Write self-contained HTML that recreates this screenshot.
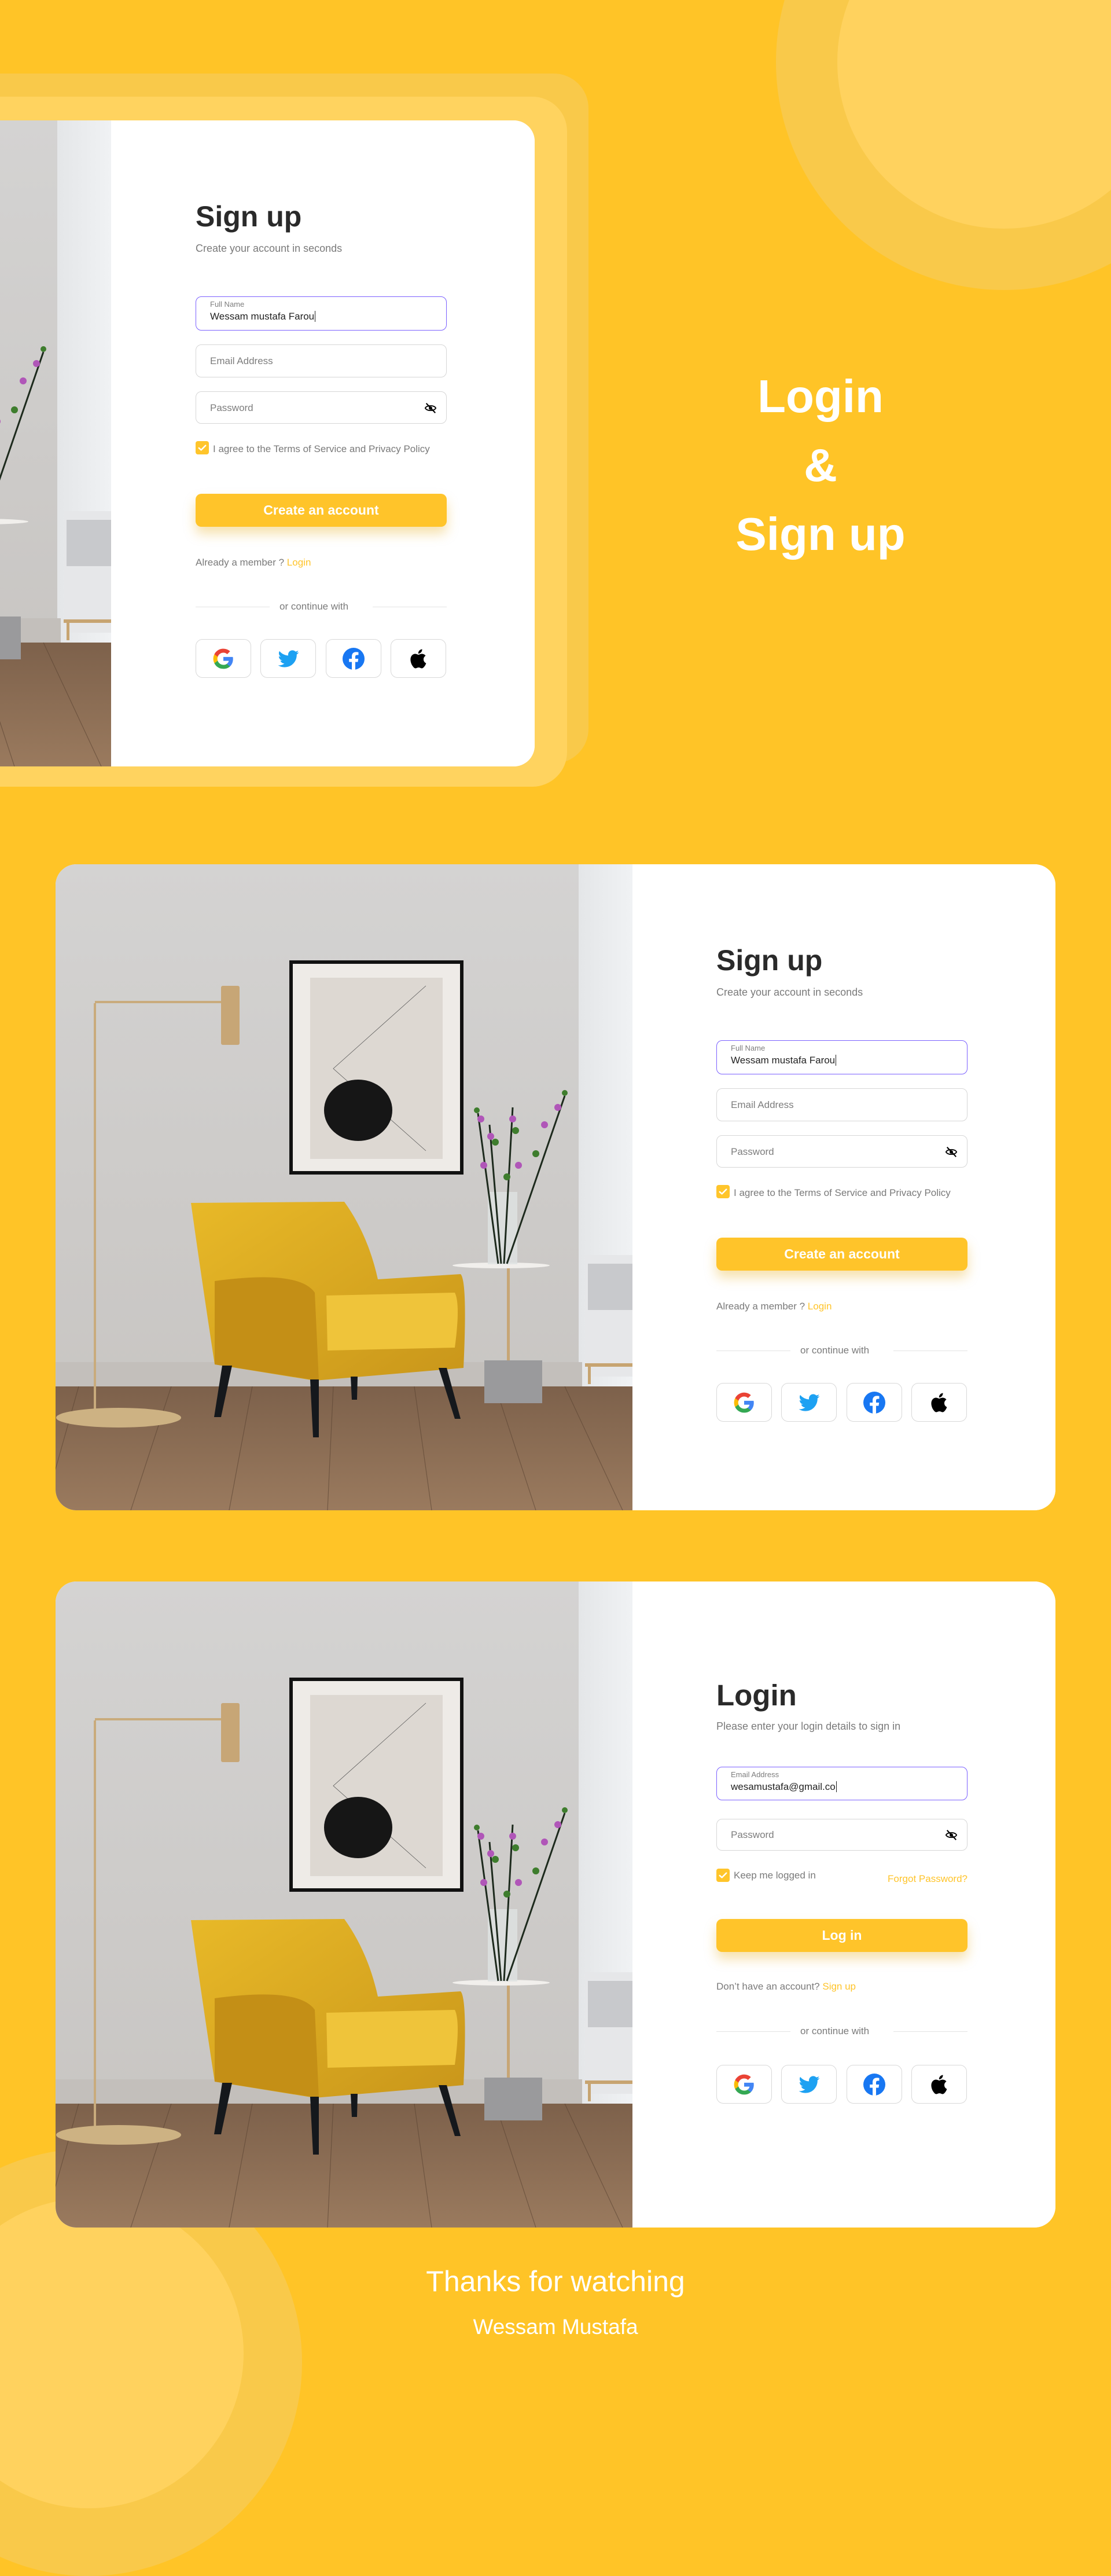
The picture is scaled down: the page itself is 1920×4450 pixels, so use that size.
<!DOCTYPE html>
<html><head><meta charset="utf-8">
<style>
*{margin:0;padding:0;box-sizing:border-box}
body{width:1920px;height:4079px;background:#FFC427;position:relative;overflow:hidden;font-family:"Liberation Sans",Arial,sans-serif}
.abs{position:absolute}
.circ{position:absolute;border-radius:50%}
.panel{position:absolute;background:#fff;overflow:hidden}
.t{position:absolute;white-space:nowrap}
.inp{position:absolute;left:145px;width:434px;border:1.5px solid #d6d6d6;border-radius:10px;background:#fff}
.inp.f{border-color:#7b61ff}
.ph{position:absolute;left:24px;font-size:17px;color:#7d7d7d;white-space:nowrap}
.cb{position:absolute;left:145px;width:23px;height:23px;background:#FFC52B;border-radius:4px}
.btn{position:absolute;left:145px;width:434px;height:57px;background:#FFC42A;border-radius:10px;color:#fff;font-weight:bold;font-size:23px;text-align:center;line-height:57px;box-shadow:0 12px 20px rgba(230,170,20,.35)}
.soc{position:absolute;width:96px;height:67px;border:1.5px solid #d8d8d8;border-radius:12px;background:#fff;display:flex;align-items:center;justify-content:center}
.line{position:absolute;height:1px;background:#e3e3e3}
.big{position:absolute;left:1418px;transform:translateX(-50%);color:#fff;font-weight:bold;font-size:80px;line-height:80px;white-space:nowrap}
</style></head><body>
<svg width="0" height="0" style="position:absolute">
<defs>
<symbol id="photo" viewBox="0 0 997 1116" preserveAspectRatio="none">
<defs>
<linearGradient id="wall" x1="0" y1="0" x2="0" y2="1"><stop offset="0" stop-color="#d4d3d2"/><stop offset="1" stop-color="#c6c3c0"/></linearGradient>
<linearGradient id="wall2" x1="0" y1="0" x2="1" y2="0"><stop offset="0" stop-color="#e4e6e8"/><stop offset="1" stop-color="#f0f2f4"/></linearGradient>
<linearGradient id="floor" x1="0" y1="0" x2="0" y2="1"><stop offset="0" stop-color="#7d614b"/><stop offset="1" stop-color="#9a7a5e"/></linearGradient>
<linearGradient id="chair" x1="0" y1="0" x2="1" y2="1"><stop offset="0" stop-color="#e8b928"/><stop offset="1" stop-color="#c9961a"/></linearGradient>
</defs>
<rect width="997" height="1116" fill="url(#wall)"/>
<rect x="904" width="93" height="1116" fill="url(#wall2)"/>
<rect y="860" width="910" height="42" fill="#c3bfbb"/>
<rect y="902" width="997" height="214" fill="url(#floor)"/>
<g stroke="#5a4332" stroke-width="1.2" opacity=".6">
<line x1="40" y1="902" x2="-20" y2="1116"/><line x1="200" y1="902" x2="130" y2="1116"/><line x1="340" y1="902" x2="300" y2="1116"/><line x1="480" y1="902" x2="470" y2="1116"/><line x1="620" y1="902" x2="650" y2="1116"/><line x1="760" y1="902" x2="830" y2="1116"/><line x1="880" y1="902" x2="980" y2="1116"/>
</g>
<rect x="915" y="675" width="85" height="210" fill="#e6e7e9"/><rect x="920" y="690" width="80" height="80" fill="#c8c9cc"/><rect x="915" y="862" width="85" height="6" fill="#c7a471"/><rect x="920" y="868" width="5" height="30" fill="#c7a471"/>
<rect x="404" y="166" width="301" height="370" fill="#111"/>
<rect x="410" y="172" width="289" height="358" fill="#eeebe7"/>
<rect x="440" y="196" width="229" height="313" fill="#ddd8d2"/>
<polyline points="640,210 480,353 640,495" fill="none" stroke="#555" stroke-width="0.8"/>
<ellipse cx="523" cy="425" rx="59" ry="53" fill="#161616"/>
<rect x="66" y="240" width="4" height="710" fill="#c9ab7c"/>
<rect x="68" y="236" width="222" height="4" fill="#c9ab7c"/>
<rect x="286" y="210" width="32" height="102" rx="3" fill="#c7a676"/>
<ellipse cx="109" cy="956" rx="108" ry="17" fill="#cdb283"/>
<rect x="780" y="693" width="5" height="170" fill="#c7a676"/>
<ellipse cx="770" cy="693" rx="84" ry="5" fill="#f1efec"/>
<rect x="741" y="857" width="100" height="74" fill="#9a9a9c"/>
<rect x="747" y="566" width="51" height="125" fill="#dfe2e2" opacity=".8"/>
<g stroke="#1d2a1d" stroke-width="3" fill="none"><path d="M765 690 L730 430"/><path d="M775 690 L790 420"/><path d="M780 690 L880 400"/><path d="M770 690 L750 450"/></g>
<g fill="#b056b8"><circle cx="735" cy="440" r="6"/><circle cx="752" cy="470" r="6"/><circle cx="790" cy="440" r="6"/><circle cx="868" cy="420" r="6"/><circle cx="845" cy="450" r="6"/><circle cx="740" cy="520" r="6"/><circle cx="800" cy="520" r="6"/></g>
<g fill="#3e7d2d"><circle cx="728" cy="425" r="5"/><circle cx="760" cy="480" r="6"/><circle cx="795" cy="460" r="6"/><circle cx="880" cy="395" r="5"/><circle cx="830" cy="500" r="6"/><circle cx="780" cy="540" r="6"/></g>
<path d="M234 585 L499 583 Q540 640 557 717 L700 708 Q712 720 705 870 L448 892 L275 864 Q250 700 234 585 Z" fill="url(#chair)"/>
<path d="M275 720 Q420 700 448 740 L455 892 L275 864 Z" fill="#c48f16"/>
<path d="M468 745 L690 740 Q700 760 690 835 L470 840 Z" fill="#efc43a"/>
<g fill="#15181c"><path d="M288 866 L305 866 L286 955 L274 955 Z"/><path d="M440 890 L455 890 L455 990 L445 990 Z"/><path d="M510 885 L522 885 L521 925 L512 925 Z"/><path d="M662 870 L676 870 L700 958 L690 958 Z"/></g>
</symbol>
<symbol id="g" viewBox="0 0 24 24"><path fill="#4285F4" d="M22.56 12.25c0-.78-.07-1.53-.2-2.25H12v4.26h5.92c-.26 1.37-1.04 2.53-2.21 3.31v2.77h3.57c2.08-1.92 3.28-4.74 3.28-8.09z"/><path fill="#34A853" d="M12 23c2.97 0 5.46-.98 7.28-2.660l-3.57-2.77c-.98.66-2.23 1.06-3.71 1.06-2.86 0-5.29-1.93-6.16-4.53H2.18v2.84C3.99 20.53 7.7 23 12 23z"/><path fill="#FBBC05" d="M5.84 14.09c-.22-.66-.35-1.36-.35-2.09s.13-1.43.35-2.09V7.07H2.18C1.43 8.55 1 10.22 1 12s.43 3.450 1.18 4.93l3.66-2.84z"/><path fill="#EA4335" d="M12 5.38c1.62 0 3.06.56 4.21 1.64l3.15-3.15C17.45 2.09 14.97 1 12 1 7.7 1 3.99 3.47 2.18 7.07l3.66 2.84c.87-2.6 3.3-4.53 6.16-4.53z"/></symbol>
<symbol id="tw" viewBox="0 0 24 24"><path fill="#1DA1F2" d="M23.643 4.937c-.835.37-1.732.62-2.675.733.962-.576 1.7-1.49 2.048-2.578-.9.534-1.897.922-2.958 1.13-.85-.904-2.06-1.47-3.4-1.470-2.572 0-4.658 2.086-4.658 4.66 0 .364.042.718.12 1.06-3.873-.195-7.304-2.05-9.602-4.868-.4.69-.63 1.49-.63 2.342 0 1.616.823 3.043 2.072 3.878-.764-.025-1.482-.234-2.11-.583v.06c0 2.257 1.605 4.14 3.737 4.568-.392.106-.803.162-1.227.162-.3 0-.593-.028-.877-.082.593 1.85 2.313 3.198 4.352 3.234-1.595 1.25-3.604 1.995-5.786 1.995-.376 0-.747-.022-1.112-.065 2.062 1.323 4.51 2.093 7.14 2.093 8.57 0 13.255-7.098 13.255-13.254 0-.2-.005-.402-.014-.602.91-.658 1.7-1.477 2.323-2.41z"/></symbol>
<symbol id="fb" viewBox="0 0 24 24"><circle cx="12" cy="12" r="12" fill="#1877F2"/><path fill="#fff" d="M16.671 15.469L17.203 12h-3.328V9.749c0-.949.465-1.874 1.956-1.874h1.513V4.922s-1.374-.235-2.686-.235c-2.741 0-4.533 1.662-4.533 4.669V12H7.078v3.469h3.047v8.385a12.09 12.09 0 003.75 0v-8.385h2.796z"/></symbol>
<symbol id="ap" viewBox="0 0 24 24"><path fill="#000" d="M16.365 1.43c0 1.14-.493 2.27-1.177 3.08-.744.9-1.99 1.57-2.987 1.57-.12 0-.23-.02-.3-.03-.01-.06-.04-.22-.04-.39 0-1.15.572-2.27 1.206-2.98.804-.94 2.142-1.64 3.248-1.68.03.13.05.28.05.43zm4.565 15.71c-.03.07-.463 1.58-1.518 3.12-.945 1.34-1.94 2.71-3.43 2.71-1.517 0-1.9-.88-3.63-.88-1.698 0-2.302.91-3.67.91-1.377 0-2.332-1.26-3.428-2.8-1.287-1.82-2.323-4.63-2.323-7.28 0-4.28 2.797-6.55 5.552-6.55 1.448 0 2.675.95 3.6.95.865 0 2.222-1.010 3.902-1.01.613 0 2.886.06 4.374 2.19-.13.09-2.383 1.37-2.383 4.19 0 3.26 2.854 4.42 2.955 4.45z"/></symbol>
<symbol id="eye" viewBox="0 0 24 24"><path d="M2 12 C5 6 19 6 22 12 C19 18 5 18 2 12 Z" fill="none" stroke="#000" stroke-width="2"/><circle cx="12" cy="12" r="3.2" fill="#000"/><line x1="4" y1="3" x2="21" y2="21" stroke="#000" stroke-width="2.2"/></symbol>
<symbol id="chk" viewBox="0 0 24 24"><path d="M6 12.5 L10 16 L18 8" fill="none" stroke="#fff" stroke-width="2.6" stroke-linecap="round" stroke-linejoin="round"/></symbol>
</defs></svg>

<!-- top-right circles -->
<div class="circ" style="left:1341px;top:-287px;width:788px;height:788px;background:#F9C94A"></div>
<div class="circ" style="left:1447px;top:-181px;width:576px;height:576px;background:#FFD25E"></div>
<!-- bottom-left circles -->
<div class="circ" style="left:-216px;top:3712px;width:738px;height:738px;background:#F9C94A"></div>
<div class="circ" style="left:-115px;top:3797px;width:536px;height:536px;background:#FFD25E"></div>

<!-- top card layers -->
<div class="abs" style="left:0;top:127px;width:1017px;height:1192px;background:#F9C94A;border-radius:0 60px 60px 0"></div>
<div class="abs" style="left:0;top:167px;width:980px;height:1192px;background:#FFD35F;border-radius:0 60px 60px 0"></div>
<div class="abs" style="left:0;top:208px;width:924px;height:1116px;border-radius:0 36px 36px 0;overflow:hidden;background:#fff">
  <svg class="abs" style="left:0;top:0" width="193" height="1116" viewBox="805 0 193 1116" preserveAspectRatio="none"><use href="#photo" x="0" y="0" width="997" height="1116"/></svg>
  <div class="panel" style="left:193px;top:0;width:731px;height:1116px">
    <div class="t" style="left:145px;top:141px;font-size:50px;line-height:50px;font-weight:bold;color:#2a2a2a">Sign up</div>
    <div class="t" style="left:145px;top:212px;font-size:18px;line-height:18px;color:#7a7a7a">Create your account in seconds</div>
    <div class="inp f" style="top:304px;height:59px"><div class="ph" style="top:6px;font-size:13px;line-height:13px">Full Name</div><div class="ph" style="top:25px;font-size:17px;line-height:17px;color:#222">Wessam mustafa Farou<span style="border-left:1.5px solid #222;margin-left:1px"></span></div></div>
    <div class="inp" style="top:387px;height:57px"><div class="ph" style="top:19px;line-height:17px">Email Address</div></div>
    <div class="inp" style="top:468px;height:56px"><div class="ph" style="top:19px;line-height:17px">Password</div><svg class="abs" style="right:16px;top:17px" width="22" height="22"><use href="#eye"/></svg></div>
    <div class="cb" style="top:554px"><svg width="23" height="23"><use href="#chk"/></svg></div>
    <div class="t" style="left:175px;top:559px;font-size:17px;line-height:17px;color:#7a7a7a">I agree to the Terms of Service and Privacy Policy</div>
    <div class="btn" style="top:645px">Create an account</div>
    <div class="t" style="left:145px;top:755px;font-size:17px;line-height:17px;color:#7a7a7a">Already a member ? <span style="color:#FFC42A">Login</span></div>
    <div class="line" style="left:145px;top:840px;width:128px"></div><div class="line" style="left:451px;top:840px;width:128px"></div>
    <div class="t" style="left:290px;top:831px;font-size:17px;line-height:17px;color:#7a7a7a">or continue with</div>
    <div class="soc" style="left:145px;top:896px"><svg width="38" height="38"><use href="#g"/></svg></div>
    <div class="soc" style="left:257px;top:896px"><svg width="38" height="38"><use href="#tw"/></svg></div>
    <div class="soc" style="left:370px;top:896px"><svg width="38" height="38"><use href="#fb"/></svg></div>
    <div class="soc" style="left:482px;top:896px"><svg width="36" height="36"><use href="#ap"/></svg></div>
  </div>
</div>

<div class="big" style="top:645px">Login</div>
<div class="big" style="top:764px">&amp;</div>
<div class="big" style="top:883px">Sign up</div>

<!-- card 2 -->
<div class="abs" style="left:96px;top:1493px;width:1728px;height:1116px;border-radius:36px;overflow:hidden;background:#fff">
  <svg class="abs" style="left:0;top:0" width="997" height="1116"><use href="#photo" width="997" height="1116"/></svg>
  <div class="panel" style="left:997px;top:0;width:731px;height:1116px">
    <div class="t" style="left:145px;top:141px;font-size:50px;line-height:50px;font-weight:bold;color:#2a2a2a">Sign up</div>
    <div class="t" style="left:145px;top:212px;font-size:18px;line-height:18px;color:#7a7a7a">Create your account in seconds</div>
    <div class="inp f" style="top:304px;height:59px"><div class="ph" style="top:6px;font-size:13px;line-height:13px">Full Name</div><div class="ph" style="top:25px;font-size:17px;line-height:17px;color:#222">Wessam mustafa Farou<span style="border-left:1.5px solid #222;margin-left:1px"></span></div></div>
    <div class="inp" style="top:387px;height:57px"><div class="ph" style="top:19px;line-height:17px">Email Address</div></div>
    <div class="inp" style="top:468px;height:56px"><div class="ph" style="top:19px;line-height:17px">Password</div><svg class="abs" style="right:16px;top:17px" width="22" height="22"><use href="#eye"/></svg></div>
    <div class="cb" style="top:554px"><svg width="23" height="23"><use href="#chk"/></svg></div>
    <div class="t" style="left:175px;top:559px;font-size:17px;line-height:17px;color:#7a7a7a">I agree to the Terms of Service and Privacy Policy</div>
    <div class="btn" style="top:645px">Create an account</div>
    <div class="t" style="left:145px;top:755px;font-size:17px;line-height:17px;color:#7a7a7a">Already a member ? <span style="color:#FFC42A">Login</span></div>
    <div class="line" style="left:145px;top:840px;width:128px"></div><div class="line" style="left:451px;top:840px;width:128px"></div>
    <div class="t" style="left:290px;top:831px;font-size:17px;line-height:17px;color:#7a7a7a">or continue with</div>
    <div class="soc" style="left:145px;top:896px"><svg width="38" height="38"><use href="#g"/></svg></div>
    <div class="soc" style="left:257px;top:896px"><svg width="38" height="38"><use href="#tw"/></svg></div>
    <div class="soc" style="left:370px;top:896px"><svg width="38" height="38"><use href="#fb"/></svg></div>
    <div class="soc" style="left:482px;top:896px"><svg width="36" height="36"><use href="#ap"/></svg></div>
  </div>
</div>

<!-- card 3 -->
<div class="abs" style="left:96px;top:2732px;width:1728px;height:1116px;border-radius:36px;overflow:hidden;background:#fff">
  <svg class="abs" style="left:0;top:0" width="997" height="1116"><use href="#photo" width="997" height="1116"/></svg>
  <div class="panel" style="left:997px;top:0;width:731px;height:1116px">
    <div class="t" style="left:145px;top:171px;font-size:51px;line-height:51px;font-weight:bold;color:#2a2a2a">Login</div>
    <div class="t" style="left:145px;top:241px;font-size:18px;line-height:18px;color:#7a7a7a">Please enter your login details to sign in</div>
    <div class="inp f" style="top:320px;height:58px"><div class="ph" style="top:6px;font-size:13px;line-height:13px">Email Address</div><div class="ph" style="top:25px;font-size:17px;line-height:17px;color:#222">wesamustafa@gmail.co<span style="border-left:1.5px solid #222;margin-left:1px"></span></div></div>
    <div class="inp" style="top:410px;height:55px"><div class="ph" style="top:18px;line-height:17px">Password</div><svg class="abs" style="right:16px;top:16px" width="22" height="22"><use href="#eye"/></svg></div>
    <div class="cb" style="top:496px"><svg width="23" height="23"><use href="#chk"/></svg></div>
    <div class="t" style="left:175px;top:499px;font-size:17px;line-height:17px;color:#7a7a7a">Keep me logged in</div>
    <div class="t" style="right:152px;top:505px;font-size:17px;line-height:17px;color:#FFC42A">Forgot Password?</div>
    <div class="btn" style="top:583px">Log in</div>
    <div class="t" style="left:145px;top:691px;font-size:17px;line-height:17px;color:#7a7a7a">Don’t have an account? <span style="color:#FFC42A">Sign up</span></div>
    <div class="line" style="left:145px;top:777px;width:128px"></div><div class="line" style="left:451px;top:777px;width:128px"></div>
    <div class="t" style="left:290px;top:768px;font-size:17px;line-height:17px;color:#7a7a7a">or continue with</div>
    <div class="soc" style="left:145px;top:835px"><svg width="38" height="38"><use href="#g"/></svg></div>
    <div class="soc" style="left:257px;top:835px"><svg width="38" height="38"><use href="#tw"/></svg></div>
    <div class="soc" style="left:370px;top:835px"><svg width="38" height="38"><use href="#fb"/></svg></div>
    <div class="soc" style="left:482px;top:835px"><svg width="36" height="36"><use href="#ap"/></svg></div>
  </div>
</div>

<div class="t" style="left:960px;transform:translateX(-50%);top:3916px;font-size:50px;line-height:50px;color:#fff">Thanks for watching</div>
<div class="t" style="left:960px;transform:translateX(-50%);top:4001px;font-size:37px;line-height:37px;color:#fff">Wessam Mustafa</div>
</body></html>
